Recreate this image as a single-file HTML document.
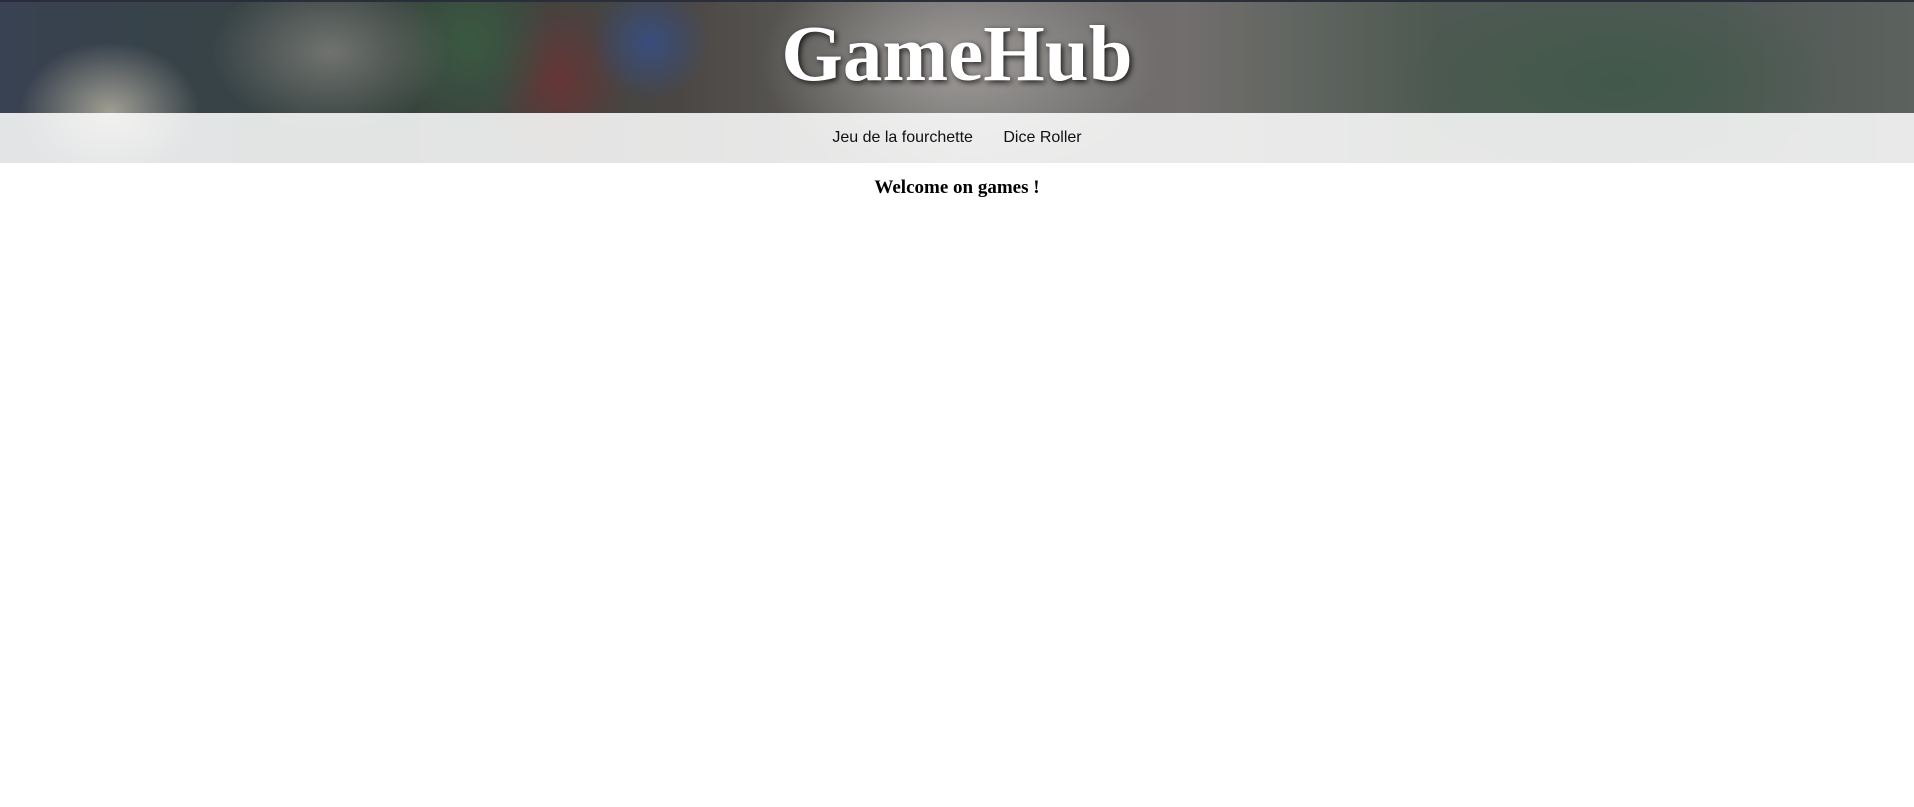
<!DOCTYPE html>
<html><head><meta charset="utf-8"><style>
html,body{margin:0;padding:0;background:#fff;width:1914px;height:807px;overflow:hidden}
header{position:relative;height:163px;border-top:2px solid #2a2d3a;box-sizing:border-box;overflow:hidden;
background:
radial-gradient(ellipse 120px 80px at 330px 50px,#8a8c88,transparent),
radial-gradient(ellipse 60px 60px at 650px 40px,#3f5a9a,transparent),
radial-gradient(ellipse 80px 90px at 470px 40px,#3f6a4a,transparent),
radial-gradient(ellipse 70px 90px at 560px 80px,#7a3a3a,transparent),
radial-gradient(ellipse 200px 120px at 960px 60px,#c7c2c0,transparent),
radial-gradient(ellipse 220px 100px at 1620px 80px,#4a6a55,transparent),
radial-gradient(ellipse 90px 70px at 110px 110px,#c9c6b8,transparent),
linear-gradient(90deg,#3f4b60 0%,#3a4d45 20%,#55504c 35%,#7f807c 50%,#8a8684 62%,#5a6a60 75%,#5e6a66 90%,#6e7670 100%);}
header::after{content:"";position:absolute;inset:0;background:rgba(40,40,40,.25)}
h1{position:absolute;left:0;right:0;top:8px;margin:0;text-align:center;font-family:"Liberation Serif",serif;font-weight:bold;font-size:79px;color:#fff;text-shadow:2px 2px 6px rgba(0,0,0,.8);z-index:2}
nav{position:absolute;left:0;right:0;top:111px;height:50px;background:rgba(255,255,255,.86);z-index:2;text-align:center;font-family:"Liberation Sans",sans-serif;font-size:16px;line-height:50px}
nav a{color:#111;text-decoration:none;margin:0 13px}
h2{margin:14px 0 0;text-align:center;font-family:"Liberation Serif",serif;font-size:19px;font-weight:bold;color:#000}
</style></head><body>
<header><h1>GameHub</h1><nav><a>Jeu de la fourchette</a> <a>Dice Roller</a></nav></header>
<h2>Welcome on games !</h2>
</body></html>
